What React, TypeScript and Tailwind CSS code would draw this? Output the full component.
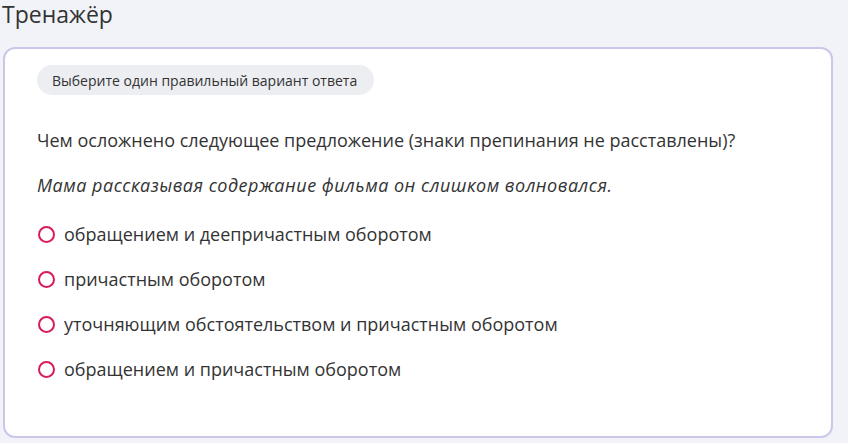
import React from "react";

const options = [
  "обращением и деепричастным оборотом",
  "причастным оборотом",
  "уточняющим обстоятельством и причастным оборотом",
  "обращением и причастным оборотом",
];

export default function App() {
  return (
    <div
      className="w-[848px] h-[443px] bg-[#f1f3f8] text-[#333333] overflow-hidden"
      style={{ fontFamily: '"Open Sans", sans-serif' }}
    >
      <div className="pl-[2px] h-[28px] text-[23px] leading-[28px]">Тренажёр</div>
      <div className="mt-[19px] ml-[3px] w-[830px] h-[391px] bg-white border-2 border-[#cbc7ea] rounded-[12px] pl-[32px] pt-[16px]">
        <div className="inline-flex h-[30px] items-center pl-[15px] pr-[17px] rounded-full bg-[#eceef2] text-[14px]">
          Выберите один правильный вариант ответа
        </div>
        <div className="mt-[32px] text-[18px] leading-[26px]">
          Чем осложнено следующее предложение (знаки препинания не расставлены)?
        </div>
        <div className="mt-[19px] text-[18px] leading-[26px] italic tracking-[0.5px]">
          Мама рассказывая содержание фильма он слишком волновался.
        </div>
        <div className="mt-[23px] flex flex-col gap-[19px]">
          {options.map((o) => (
            <div key={o} className="flex items-center h-[26px] text-[18px]">
              <span className="w-[17px] h-[17px] rounded-full border-2 border-[#d81b60] mr-[9px] ml-[1px] shrink-0" />
              <span>{o}</span>
            </div>
          ))}
        </div>
      </div>
    </div>
  );
}
